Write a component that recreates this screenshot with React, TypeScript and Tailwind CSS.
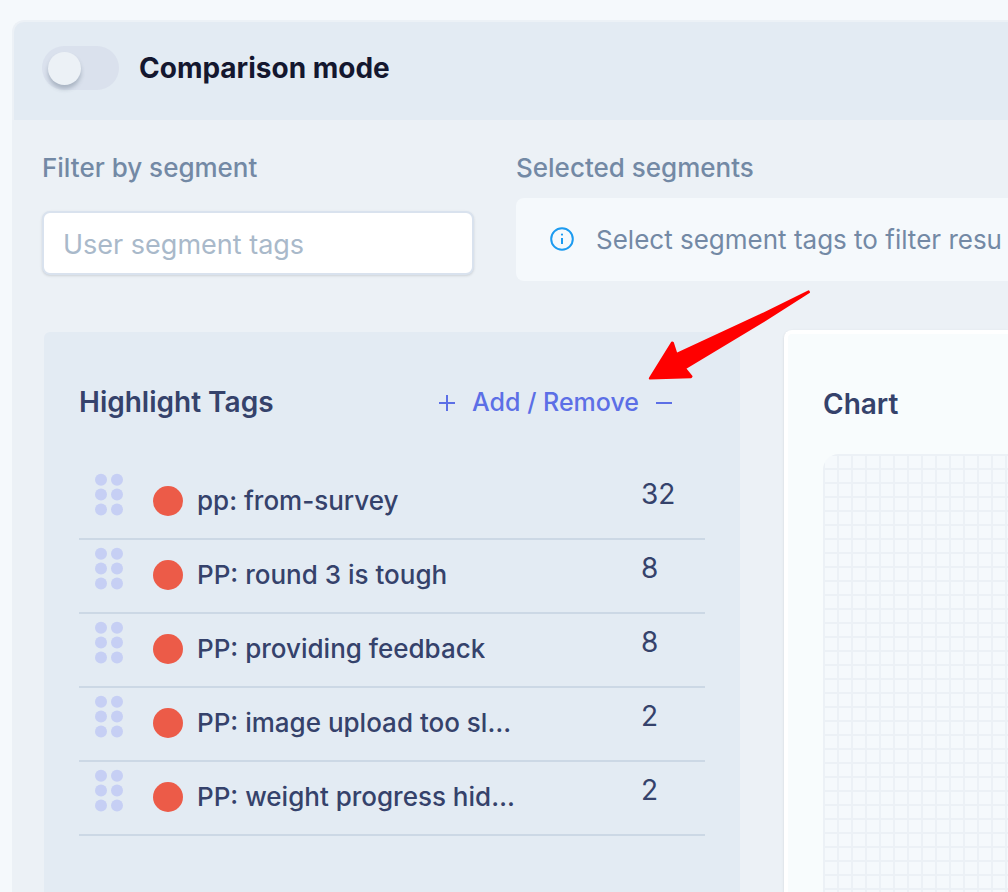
import { useState } from "react";

type Tag = {
  name: string;
  count: number;
};

const tags: Tag[] = [
  { name: "pp: from-survey", count: 32 },
  { name: "PP: round 3 is tough", count: 8 },
  { name: "PP: providing feedback", count: 8 },
  { name: "PP: image upload too sl…", count: 2 },
  { name: "PP: weight progress hid…", count: 2 },
];

function InfoIcon() {
  return (
    <svg viewBox="0 0 24 24" className="size-6 shrink-0 overflow-visible" fill="none" aria-hidden="true">
      <circle cx="12" cy="11" r="10.8" stroke="#1c9bf0" strokeWidth="2" />
      <path d="M12 10v6" stroke="#1c9bf0" strokeWidth="2" />
      <circle cx="12" cy="6.6" r="1.1" fill="#1c9bf0" />
    </svg>
  );
}

function GripIcon() {
  return (
    <svg viewBox="0 0 28 42" className="h-[42px] w-7 shrink-0 overflow-visible" fill="#c6cff4" aria-hidden="true">
      {[6.7, 21.6, 36.4].map((cy) => (
        <g key={cy}>
          <circle cx="6" cy={cy} r="6" />
          <circle cx="22" cy={cy} r="6" />
        </g>
      ))}
    </svg>
  );
}

function PlusIcon() {
  return (
    <svg viewBox="0 0 18 18" className="size-[18px]" stroke="currentColor" strokeWidth="2" aria-hidden="true">
      <path d="M1 10h16M9 2v16" />
    </svg>
  );
}

function MinusIcon() {
  return (
    <svg viewBox="0 0 18 18" className="size-[18px]" stroke="currentColor" strokeWidth="2" aria-hidden="true">
      <path d="M1 10h16" />
    </svg>
  );
}

function Arrow() {
  return (
    <svg
      viewBox="0 0 162 90"
      className="pointer-events-none absolute -top-[42px] left-[604px] h-[90px] w-[162px]"
      fill="#ff0000"
      stroke="#ff0000"
      strokeWidth="2"
      strokeLinejoin="round"
      aria-hidden="true"
    >
      <path d="M160.5 1.3 161 2.2 117.5 30 37 78.5 43.5 86.5 43 87.2 1.8 88.4 24 52.5 25 53 28.5 64 112.5 25Z" />
    </svg>
  );
}

function TagRow({ tag }: { tag: Tag }) {
  return (
    <li className="flex h-[74px] items-center border-b-2 border-[#ccd8e5] pb-4 pl-4">
      <GripIcon />
      <div className="flex min-w-0 flex-1 items-center gap-3.5 pt-3.5 pl-[30px]">
        <span className="size-[30px] shrink-0 rounded-full bg-[#ec5b48]" />
        <span className="truncate text-[26px] leading-8 font-medium">{tag.name}</span>
      </div>
      <span className="w-16 shrink-0 text-[28px] leading-8">{tag.count}</span>
    </li>
  );
}

export default function App() {
  const [comparison, setComparison] = useState(false);

  return (
    <div className="flex min-h-screen flex-col overflow-hidden bg-[#f5f9fc] pt-5 pl-3 font-['Inter',sans-serif] text-[#35426b]">
      <main className="flex flex-1 flex-col overflow-hidden rounded-tl-xl border-t-2 border-l-2 border-[#ecf1f6] bg-[#ecf1f6]">
        <header className="bg-[#e3ebf3] px-7 pt-6 pb-[30px]">
          <label className="flex items-center gap-5 text-[28px] leading-8 font-bold text-[#14172f]">
            <input
              type="checkbox"
              role="switch"
              checked={comparison}
              onChange={(e) => setComparison(e.target.checked)}
              className="h-11 w-[77px] shrink-0 appearance-none rounded-full bg-[#dae1ed] p-1.5 before:block before:size-[33px] before:rounded-full before:bg-[#ecf1f6] before:shadow-[0_4px_4px_rgba(60,80,100,0.3)] checked:before:ml-8"
            />
            Comparison mode
          </label>
        </header>

        <section className="flex gap-[42px] pt-8 pl-7">
          <div className="w-[432px] shrink-0">
            <label htmlFor="segment" className="block text-[26px] leading-8 font-medium text-[#7389a5]">
              Filter by segment
            </label>
            <input
              id="segment"
              type="text"
              placeholder="User segment tags"
              className="mt-[27px] h-16 w-full rounded-lg border-2 border-[#d9e2ee] bg-white px-[19px] pt-0.5 text-[27px] shadow-sm outline-none placeholder:text-[#a9b9ca]"
            />
          </div>
          <div className="min-w-0 flex-1">
            <h2 className="text-[26px] leading-8 font-medium text-[#7389a5]">Selected segments</h2>
            <div className="mt-3.5 flex h-[83px] items-center gap-[22px] overflow-hidden rounded-l-lg bg-[#f5f9fc] pl-[34px] text-[#7389a5]">
              <InfoIcon />
              <p className="text-[26px] leading-8 whitespace-nowrap">Select segment tags to filter resu</p>
            </div>
          </div>
        </section>

        <section className="mt-[49px] flex flex-1 gap-[42px] pl-7">
          <div className="relative w-[700px] shrink-0 rounded-t-lg border-2 border-b-0 border-[#ecf1f6] bg-[#e3ebf3] px-[35px] pt-[54px]">
            <div className="flex items-center justify-between pr-8">
              <h2 className="text-[28px] leading-8 font-semibold">Highlight Tags</h2>
              <button type="button" className="flex items-center gap-4 text-[25px] leading-8 font-medium text-[#5c6fe6]">
                <PlusIcon />
                Add / Remove
                <MinusIcon />
              </button>
            </div>
            <ul className="mt-12">
              {tags.map((tag) => (
                <TagRow key={tag.name} tag={tag} />
              ))}
            </ul>
            <Arrow />
          </div>

          <div className="flex min-w-0 flex-1 flex-col rounded-tl-lg border-t-4 border-l-4 border-white bg-[#f8fcfd] pt-[54px] pl-[35px] shadow-sm">
            <h2 className="text-[28px] leading-8 font-semibold">Chart</h2>
            <div className="mt-[34px] flex-1 rounded-tl-2xl bg-[#f5f9fc] bg-[linear-gradient(#ecf1f6_2px,transparent_2px),linear-gradient(90deg,#ecf1f6_2px,transparent_2px)] bg-[size:14px_14px]" />
          </div>
        </section>
      </main>
    </div>
  );
}
